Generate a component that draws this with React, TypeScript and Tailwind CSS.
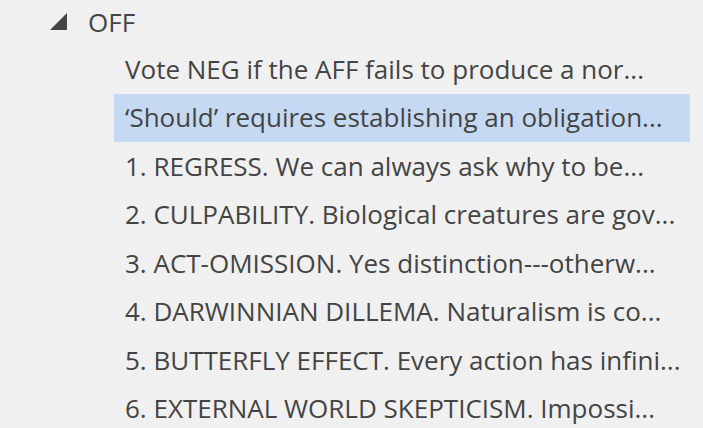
import React from 'react';

const ITEMS = [
  'Vote NEG if the AFF fails to produce a nor...',
  '\u2018Should\u2019 requires establishing an obligation...',
  '1. REGRESS. We can always ask why to be...',
  '2. CULPABILITY. Biological creatures are gov...',
  '3. ACT-OMISSION. Yes distinction---otherw...',
  '4. DARWINNIAN DILLEMA. Naturalism is co...',
  '5. BUTTERFLY EFFECT. Every action has infini...',
  '6. EXTERNAL WORLD SKEPTICISM. Impossi...',
];

const SELECTED = 1;

const App: React.FC = () => {
  return (
    <div
      className="w-[703px] h-[428px] overflow-hidden bg-[#f0f0f0] text-[#444444] text-[26px]"
      style={{ fontFamily: '"Open Sans", "Noto Sans", sans-serif' }}
    >
      <div className="flex items-center h-[45px] pl-[50px] pb-[2px]">
        <svg width="17" height="17" viewBox="0 0 17 17" className="shrink-0">
          <polygon points="17,0 17,17 0,17" fill="#444444" />
        </svg>
        <span className="ml-[21px] leading-none">OFF</span>
      </div>
      <ul className="pl-[114px] pr-[13px]">
        {ITEMS.map((item, idx) => (
          <li
            key={idx}
            className={
              'flex items-center h-[48.5px] pl-[11px] whitespace-nowrap ' +
              (idx === SELECTED ? 'bg-[#c5d9f3]' : '')
            }
          >
            {item}
          </li>
        ))}
      </ul>
    </div>
  );
};

export default App;
